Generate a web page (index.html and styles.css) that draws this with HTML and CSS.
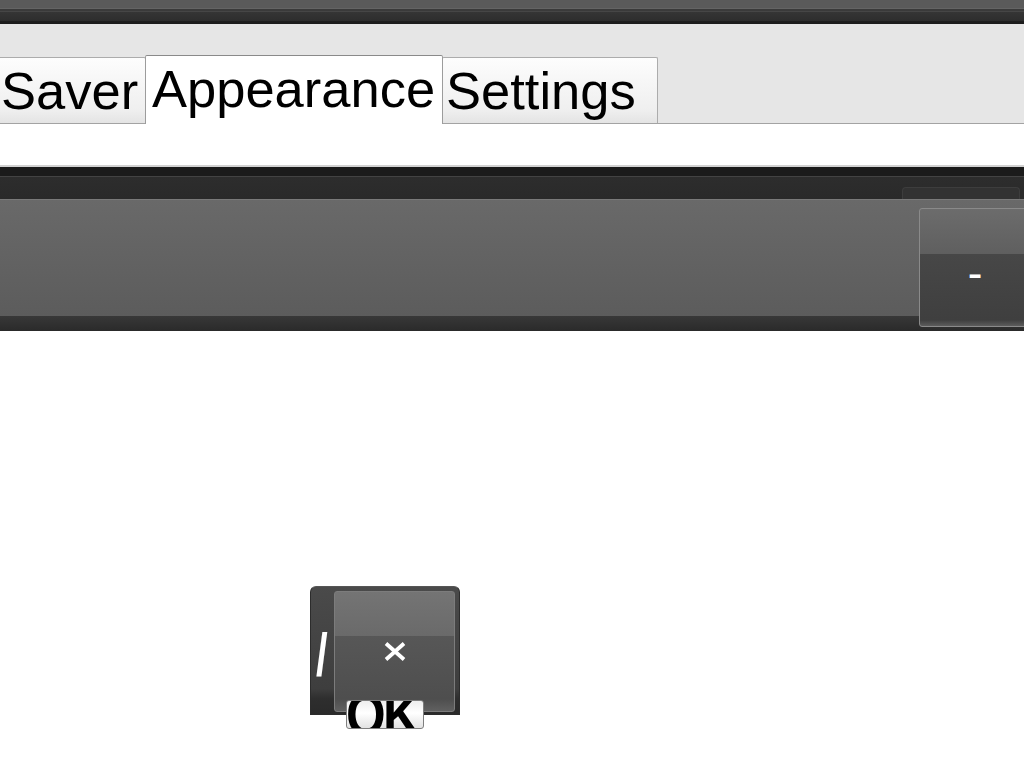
FILE: index.html
```html
<!DOCTYPE html>
<html>
<head>
<meta charset="utf-8">
<link rel="stylesheet" href="styles.css">
</head>
<body>
<div class="topbar"></div>
<div class="tabstrip">
  <div class="tab tab-saver">Saver</div>
  <div class="tab tab-active tab-appearance">Appearance</div>
  <div class="tab tab-settings">Settings</div>
</div>
<div class="tabbody"></div>
<div class="dock">
  <div class="dock-head"><div class="dock-tab"></div></div>
  <div class="dock-panel"><button class="dock-btn"><span class="dock-btn-label">-</span></button></div>
</div>
<div class="stage">
  <div class="widget">
    <div class="widget-side"><span class="slash">/</span></div>
    <div class="widget-btn">
      <svg class="close-icon" width="22" height="19" viewBox="0 0 22 19"><path d="M2 1.5 L20 17.5 M20 1.5 L2 17.5" stroke="#fff" stroke-width="3.8" stroke-linecap="butt" fill="none"/></svg>
    </div>
    <div class="ok"><span class="ok-text">OK</span></div>
  </div>
</div>
</body>
</html>
```
FILE: styles.css
```css
html, body {
  margin: 0;
  padding: 0;
  width: 1024px;
  height: 768px;
  overflow: hidden;
  background: #fff;
  font-family: "Liberation Sans", Arial, sans-serif;
}

.topbar {
  height: 24px;
  background: linear-gradient(to bottom,
    #5a5a5a 0, #5a5a5a 8px,
    #646464 8px, #646464 9px,
    #3a3a3a 9px, #3a3a3a 11px,
    #464646 11px, #464646 12px,
    #353535 12px, #2d2d2d 21px,
    #1f1f1f 21px, #1b1b1b 24px);
}

.tabstrip {
  height: 99px;
  border-bottom: 1px solid #a3a3a3;
  background: #e6e6e6;
  display: flex;
  align-items: flex-end;
}

.tab {
  box-sizing: border-box;
  height: 66px;
  padding-top: 3px;
  padding-bottom: 2px;
  border: 1px solid #acacac;
  border-bottom: 0;
  border-radius: 2px 2px 0 0;
  background: linear-gradient(#fdfdfd, #efefef 80%, #e4e4e4);
  font-size: 52.5px;
  line-height: 60px;
  white-space: nowrap;
  overflow: hidden;
  color: #000;
}

.tab-saver {
  width: 150px;
  margin-left: -4px;
  padding-left: 4px;
}

.tab-active {
  position: relative;
  z-index: 1;
  height: 69px;
  padding-top: 3px;
  padding-bottom: 5px;
  margin: 0 -1px -1px -1px;
  background: #fff;
  border-color: #9c9c9c;
  border-top-color: #8a8a8a;
}

.tab-appearance {
  width: 298px;
  padding-left: 6px;
}

.tab-settings {
  width: 216px;
  padding-left: 3px;
}

.tabbody {
  height: 41px;
  background: #fff;
  border-bottom: 2px solid #d2d2d2;
}

.dock-head {
  height: 32px;
  background: linear-gradient(to bottom,
    #1b1b1b 0, #1b1b1b 9px,
    #434343 9px, #434343 10px,
    #2d2d2d 10px, #2a2a2a 32px);
  display: flex;
  justify-content: flex-end;
  align-items: flex-end;
}

.dock-tab {
  box-sizing: border-box;
  width: 118px;
  height: 12px;
  margin-right: 4px;
  border: 1px solid #3d3d3d;
  border-bottom: 0;
  border-radius: 4px 4px 0 0;
  background: #323232;
}

.dock-panel {
  height: 132px;
  background: linear-gradient(to bottom,
    #7a7a7a 0, #7a7a7a 1px,
    #696969 1px, #5c5c5c 117px,
    #383838 117px, #2a2a2a 132px);
  display: flex;
  justify-content: flex-end;
  align-items: flex-start;
  overflow: hidden;
}

.dock-btn {
  box-sizing: border-box;
  width: 112px;
  height: 119px;
  margin: 9px -7px 0 0;
  padding: 0;
  border: 1px solid #8a8a8a;
  border-radius: 3px;
  background: linear-gradient(to bottom,
    #6c6c6c 0, #5f5f5f 38.6%,
    #474747 38.6%, #3f3f3f 95%, #5c5c5c 100%);
  color: #fff;
  font-family: "Liberation Sans", Arial, sans-serif;
  font-size: 44px;
  display: flex;
  justify-content: center;
  align-items: flex-start;
}

.dock-btn-label {
  display: block;
  margin-top: 42px;
  line-height: 44px;
}

.stage {
  padding: 255px 0 0 310px;
}

.widget {
  position: relative;
  box-sizing: border-box;
  width: 150px;
  height: 129px;
  padding: 4px 4px 2px 0;
  border: 1px solid #2c2c2c;
  border-top-color: #555;
  border-radius: 6px 6px 0 0;
  background: linear-gradient(to bottom, #4a4a4a, #3e3e3e 80%, #2e2e2e 88%, #2a2a2a);
  display: flex;
}

.widget-side {
  width: 23px;
  overflow: hidden;
}

.slash {
  display: block;
  margin-top: 34px;
  margin-left: 5px;
  color: #fff;
  font-size: 60px;
  font-weight: bold;
  line-height: 60px;
  transform: scaleX(0.7);
  transform-origin: left center;
}

.widget-btn {
  box-sizing: border-box;
  width: 121px;
  height: 121px;
  border: 1px solid #7c7c7c;
  border-radius: 3px;
  background: linear-gradient(to bottom,
    #747474 0, #6a6a6a 37%,
    #575757 37%, #4e4e4e 90%, #606060 100%);
  display: flex;
  align-items: center;
  justify-content: center;
}

.close-icon {
  display: block;
}

.ok {
  position: absolute;
  left: 35px;
  top: 113px;
  box-sizing: border-box;
  width: 78px;
  height: 29px;
  border: 1px solid #7e7e7e;
  border-radius: 3px;
  background: linear-gradient(to bottom, #eeeeee, #ffffff 45%, #e2e2e2);
  overflow: hidden;
  white-space: nowrap;
  color: #000;
}

.ok-text {
  display: inline-block;
  margin-left: -1px;
  font-size: 60px;
  font-weight: bold;
  line-height: 27px;
  letter-spacing: -3px;
  transform: scaleX(0.85);
  transform-origin: left center;
}
```
